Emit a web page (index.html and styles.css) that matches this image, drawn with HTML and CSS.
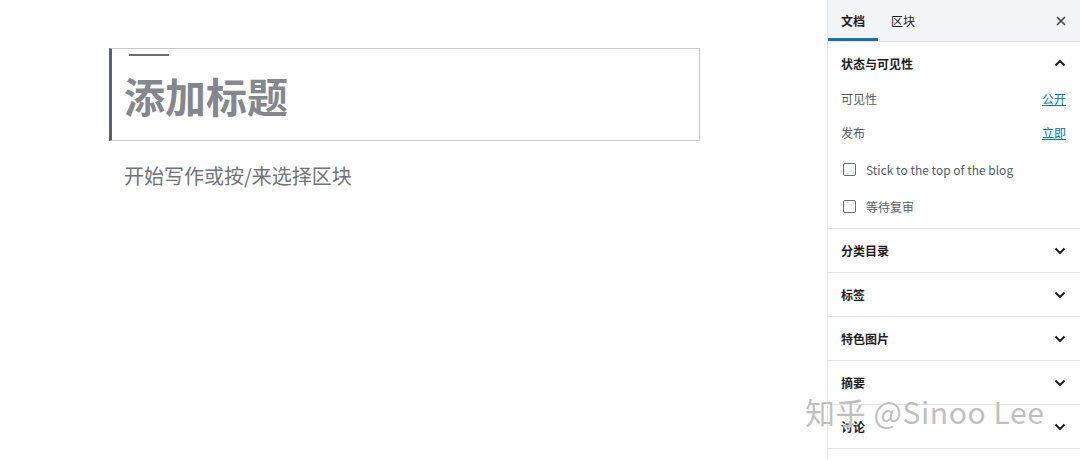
FILE: index.html
```html
<!DOCTYPE html>
<html>
<head>
  <title>编辑文章</title>
  <meta charset="UTF-8">
  <link rel="stylesheet" href="styles.css">
</head>
<body>
  <div class="layout">
    <div class="editor">
      <div class="title-block">
        <div class="title-bar"></div>
        <h1 class="title-text">添加标题</h1>
      </div>
      <p class="placeholder">开始写作或按/来选择区块</p>
    </div>

    <div class="sidebar">
      <div class="sidebar-header">
        <div class="tab tab-active">文档</div>
        <div class="tab">区块</div>
        <div class="close">
          <svg width="10" height="10" viewBox="0 0 10 10"><path d="M1 1 L9 9 M9 1 L1 9" stroke="#444" stroke-width="1.6" fill="none"/></svg>
        </div>
      </div>

      <div class="panel panel-open">
        <div class="panel-title">
          <span>状态与可见性</span>
          <svg class="chev" width="12" height="8" viewBox="0 0 12 8"><path d="M1.5 6.5 L6 2 L10.5 6.5" stroke="#1e1e1e" stroke-width="2" fill="none"/></svg>
        </div>
        <div class="row">
          <span class="label">可见性</span>
          <a class="link" href="#">公开</a>
        </div>
        <div class="row row-second">
          <span class="label">发布</span>
          <a class="link" href="#">立即</a>
        </div>
        <div class="check-row check-first">
          <span class="checkbox"></span>
          <span class="check-label">Stick to the top of the blog</span>
        </div>
        <div class="check-row">
          <span class="checkbox"></span>
          <span class="check-label">等待复审</span>
        </div>
      </div>

      <div class="panel">
        <div class="panel-title">
          <span>分类目录</span>
          <svg class="chev" width="12" height="8" viewBox="0 0 12 8"><path d="M1.5 1.5 L6 6 L10.5 1.5" stroke="#1e1e1e" stroke-width="2" fill="none"/></svg>
        </div>
      </div>
      <div class="panel">
        <div class="panel-title">
          <span>标签</span>
          <svg class="chev" width="12" height="8" viewBox="0 0 12 8"><path d="M1.5 1.5 L6 6 L10.5 1.5" stroke="#1e1e1e" stroke-width="2" fill="none"/></svg>
        </div>
      </div>
      <div class="panel">
        <div class="panel-title">
          <span>特色图片</span>
          <svg class="chev" width="12" height="8" viewBox="0 0 12 8"><path d="M1.5 1.5 L6 6 L10.5 1.5" stroke="#1e1e1e" stroke-width="2" fill="none"/></svg>
        </div>
      </div>
      <div class="panel">
        <div class="panel-title">
          <span>摘要</span>
          <svg class="chev" width="12" height="8" viewBox="0 0 12 8"><path d="M1.5 1.5 L6 6 L10.5 1.5" stroke="#1e1e1e" stroke-width="2" fill="none"/></svg>
        </div>
      </div>
      <div class="panel">
        <div class="panel-title">
          <span>讨论</span>
          <svg class="chev" width="12" height="8" viewBox="0 0 12 8"><path d="M1.5 1.5 L6 6 L10.5 1.5" stroke="#1e1e1e" stroke-width="2" fill="none"/></svg>
        </div>
      </div>
    </div>
  </div>

  <!-- watermark over the page -->
  <div class="watermark">知乎 @Sinoo Lee</div>
</body>
</html>
```

FILE: styles.css
```css
body {
  margin: 0;
  font-family: "Noto Sans CJK SC", "Noto Sans", sans-serif;
  background-color: #fff;
  color: #1e1e1e;
  overflow: hidden;
}
.layout {
  display: flex;
  height: 460px;
}
.editor {
  flex: 1;
  padding-top: 48px;
}
.title-block {
  margin-left: 109px;
  width: 575px;
  height: 91px;
  border: 1px solid #c8c9cc;
  border-left: 3px solid #5b6066;
  padding-left: 12px;
  box-sizing: content-box;
}
.title-bar {
  width: 40px;
  height: 2px;
  margin: 5px 0 0 5px;
  background-color: #6c7076;
}
.title-text {
  margin: 13px 0 0 0;
  font-size: 41px;
  line-height: 52px;
  font-weight: 700;
  color: #83878e;
}
.placeholder {
  margin: 21px 0 0 124px;
  font-size: 20px;
  line-height: 28px;
  color: #6f7378;
}
.sidebar {
  width: 252px;
  border-left: 1px solid #e2e4e7;
}
.sidebar-header {
  display: flex;
  align-items: stretch;
  height: 41px;
  background-color: #f3f4f5;
  border-bottom: 1px solid #e2e4e7;
}
.tab {
  display: flex;
  align-items: center;
  padding: 0 13px;
  font-size: 12px;
  color: #1e1e1e;
  box-sizing: border-box;
  border-bottom: 3px solid transparent;
  padding-top: 3px;
}
.tab-active {
  font-weight: 700;
  width: 50px;
  border-bottom-color: #1a6fa3;
}
.close {
  margin-left: auto;
  display: flex;
  align-items: center;
  padding-right: 14px;
}
.panel {
  border-bottom: 1px solid #e2e4e7;
  padding: 0 13px 0 13px;
}
.panel-open {
  padding-bottom: 7px;
}
.panel-title {
  display: flex;
  justify-content: space-between;
  align-items: center;
  height: 43px;
  font-size: 12px;
  font-weight: 700;
}
.panel-open .panel-title {
  height: 42px;
}
.row {
  display: flex;
  justify-content: space-between;
  align-items: center;
  height: 28px;
  font-size: 12px;
  padding-right: 1px;
}
.row-second {
  margin-top: 6px;
}
.label {
  color: #555d66;
}
.link {
  color: #0073aa;
  text-decoration: underline;
}
.check-row {
  display: flex;
  align-items: center;
  height: 30px;
  margin-top: 7px;
  font-size: 12px;
  color: #555d66;
}
.check-first {
  margin-top: 8px;
}
.checkbox {
  width: 11px;
  height: 11px;
  border: 1.5px solid #6c7076;
  border-radius: 2px;
  margin: 0 10px 0 2px;
}
.chev {
  margin-right: 1px;
}
.watermark {
  position: absolute;
  left: 805px;
  top: 391px;
  font-family: "Noto Sans CJK SC", "Noto Sans", sans-serif;
  font-size: 30px;
  line-height: 40px;
  color: rgba(170, 170, 170, 0.75);
  text-shadow: 0 0 2px #fff, 0 0 1px #fff;
  letter-spacing: 0.6px;
}
```
